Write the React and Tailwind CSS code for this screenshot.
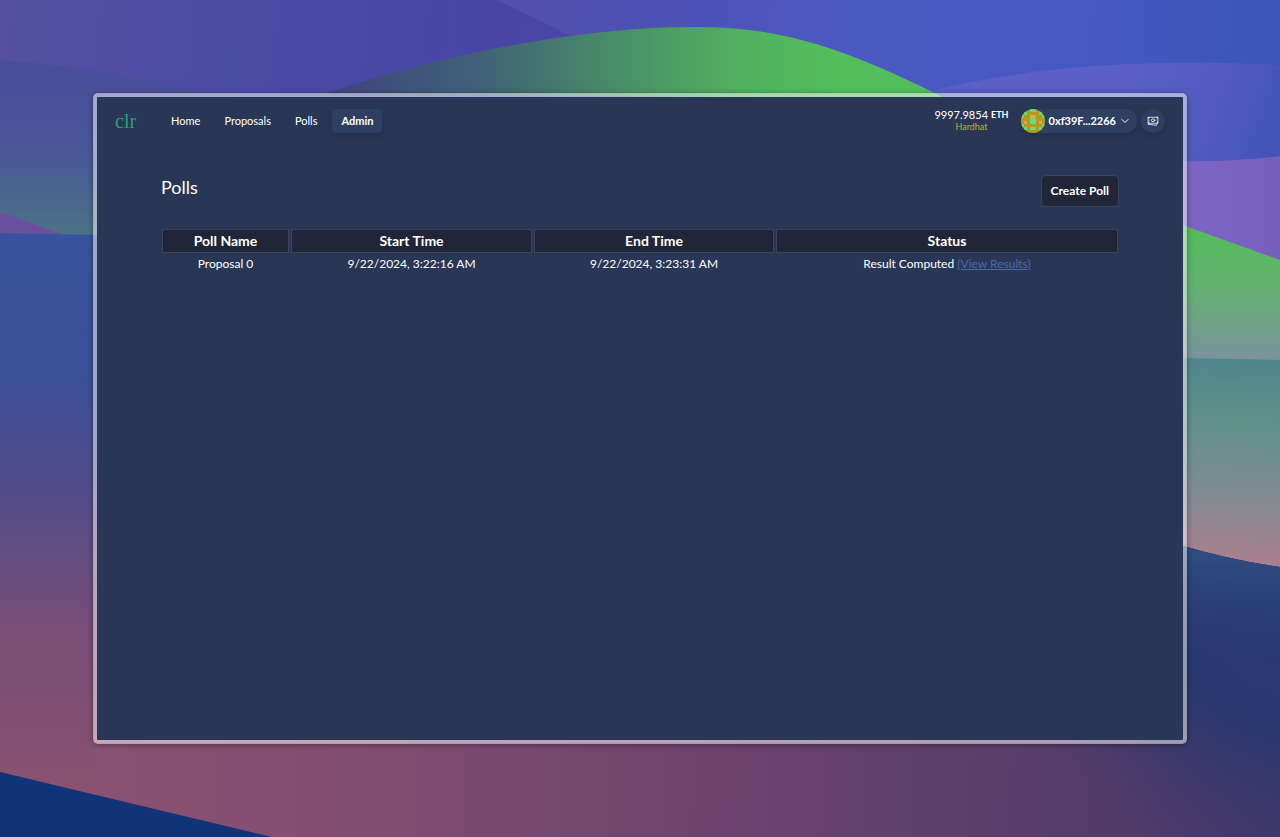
import React from "react";
import { ChevronDownIcon } from "lucide-react";

const NAV = ["Home", "Proposals", "Polls", "Admin"];

const COLUMNS = [
  { label: "Poll Name", width: "w-[127px]" },
  { label: "Start Time", width: "w-[241px]" },
  { label: "End Time", width: "w-[240px]" },
  { label: "Status", width: "w-[342px]" },
];

const POLLS = [
  { name: "Proposal 0", start: "9/22/2024, 3:22:16 AM", end: "9/22/2024, 3:23:31 AM", status: "Result Computed" },
];

function Wallpaper() {
  return (
    <svg className="absolute inset-0 h-full w-full" viewBox="0 0 1280 837" preserveAspectRatio="none" aria-hidden="true">
      <defs>
        <linearGradient id="sky" gradientUnits="userSpaceOnUse" x1="0" y1="0" x2="600" y2="60">
          <stop offset="0" stopColor="#544fa2" />
          <stop offset="0.4" stopColor="#4b4ca4" />
          <stop offset="0.8" stopColor="#4845a6" />
          <stop offset="1" stopColor="#4a47a8" />
        </linearGradient>
        <linearGradient id="ray" gradientUnits="userSpaceOnUse" x1="500" y1="0" x2="1280" y2="60">
          <stop offset="0" stopColor="#544eab" />
          <stop offset="0.2" stopColor="#4c51b5" />
          <stop offset="0.45" stopColor="#4c59c2" />
          <stop offset="0.75" stopColor="#4658c2" />
          <stop offset="1" stopColor="#3a55b8" />
        </linearGradient>
        <linearGradient id="fold" x1="0" y1="0" x2="0" y2="1">
          <stop offset="0" stopColor="#494d9c" />
          <stop offset="0.5" stopColor="#4a5698" />
          <stop offset="1" stopColor="#4c7585" />
        </linearGradient>
        <linearGradient id="hill" gradientUnits="userSpaceOnUse" x1="330" y1="0" x2="840" y2="0">
          <stop offset="0" stopColor="#3f4581" />
          <stop offset="0.3" stopColor="#3f6276" />
          <stop offset="0.6" stopColor="#4b9465" />
          <stop offset="0.8" stopColor="#50b05f" />
          <stop offset="1" stopColor="#53be5c" />
        </linearGradient>
        <linearGradient id="wave" gradientUnits="userSpaceOnUse" x1="1120" y1="60" x2="1280" y2="120">
          <stop offset="0" stopColor="#5a60c6" />
          <stop offset="0.6" stopColor="#535bc0" />
          <stop offset="1" stopColor="#4255b6" />
        </linearGradient>
        <linearGradient id="violet" x1="0" y1="0" x2="1" y2="0">
          <stop offset="0" stopColor="#7c64c4" />
          <stop offset="1" stopColor="#7660bd" />
        </linearGradient>
        <linearGradient id="meadow" gradientUnits="userSpaceOnUse" x1="0" y1="225" x2="0" y2="358">
          <stop offset="0" stopColor="#53bd5c" />
          <stop offset="0.5" stopColor="#65b073" />
          <stop offset="1" stopColor="#7b929e" />
        </linearGradient>
        <linearGradient id="lagoon" gradientUnits="userSpaceOnUse" x1="1230" y1="358" x2="1220" y2="560">
          <stop offset="0" stopColor="#4f858d" />
          <stop offset="0.3" stopColor="#5f9189" />
          <stop offset="0.65" stopColor="#7e8b91" />
          <stop offset="1" stopColor="#a9808f" />
        </linearGradient>
        <radialGradient id="deep" gradientUnits="userSpaceOnUse" cx="1290" cy="610" r="270">
          <stop offset="0" stopColor="#283b73" />
          <stop offset="0.45" stopColor="#2a3870" />
          <stop offset="1" stopColor="#3d376c" stopOpacity="0" />
        </radialGradient>
        <linearGradient id="crest" gradientUnits="userSpaceOnUse" x1="0" y1="546" x2="0" y2="660">
          <stop offset="0" stopColor="#304f84" />
          <stop offset="1" stopColor="#283b73" stopOpacity="0" />
        </linearGradient>
        <linearGradient id="dusk" gradientUnits="userSpaceOnUse" x1="0" y1="233" x2="0" y2="790">
          <stop offset="0" stopColor="#37539d" />
          <stop offset="0.25" stopColor="#3b5098" />
          <stop offset="0.45" stopColor="#504c8a" />
          <stop offset="0.7" stopColor="#764e78" />
          <stop offset="1" stopColor="#8a5270" />
        </linearGradient>
        <linearGradient id="floor" gradientUnits="userSpaceOnUse" x1="100" y1="740" x2="1280" y2="780">
          <stop offset="0" stopColor="#895272" />
          <stop offset="0.25" stopColor="#804c70" />
          <stop offset="0.5" stopColor="#6e446f" />
          <stop offset="0.75" stopColor="#5c3f69" />
          <stop offset="0.92" stopColor="#4c3969" />
          <stop offset="1" stopColor="#42376a" />
        </linearGradient>
      </defs>
      <rect width="1280" height="420" fill="url(#sky)" />
      <path d="M497 0L575 38L900 120H1280V0Z" fill="url(#ray)" />
      <path d="M0 60Q90 66 200 92V240H0Z" fill="url(#fold)" />
      <path d="M905 98C1010 68 1130 58 1280 65V170H905Z" fill="url(#wave)" />
      <path d="M320 95C420 62 560 27 695 27C780 27 840 46 945 98Z" fill="url(#hill)" />
      <path d="M1180 161Q1235 162 1280 156V270H1180Z" fill="url(#violet)" />
      <path d="M1180 224L1280 260V362H1180Z" fill="url(#meadow)" />
      <path d="M1180 358L1280 360V570H1180Z" fill="url(#lagoon)" />
      <path d="M0 212L62 234L0 236Z" fill="#6a519f" />
      <path d="M0 233L100 235V837H0Z" fill="url(#dusk)" />
      <path d="M95 735H1180V545Q1230 560 1280 567V837H95Z" fill="url(#floor)" />
      <path d="M1000 735H1180V545Q1230 560 1280 567V837H1000Z" fill="url(#deep)" />
      <path d="M1180 545Q1230 560 1280 567V670H1180Z" fill="url(#crest)" />
      <path d="M0 772L272 837H0Z" fill="#113377" />
    </svg>
  );
}

function Avatar() {
  return (
    <svg className="h-6 w-6 shrink-0 rounded-full" viewBox="0 0 8 8" shapeRendering="crispEdges" aria-hidden="true">
      <rect width="8" height="8" fill="#b39a1c" />
      <path d="M3 0h2v1H3zM1 1h1v1H1zM6 1h1v1H6zM0 2h1v1H0zM7 2h1v1H7zM3 3h2v2H3zM0 5h1v1H0zM7 5h1v1H7zM3 6h2v1H3zM1 6h1v1H1zM6 6h1v1H6z" fill="#5fe070" />
      <path d="M3 2h2v1H3zM1 4h1v1H1zM6 4h1v1H6z" fill="#e0a35a" />
    </svg>
  );
}

function BanknotesIcon() {
  return (
    <svg className="h-3 w-3" viewBox="0 0 24 24" fill="none" stroke="currentColor" strokeWidth="1.500" strokeLinecap="round" strokeLinejoin="round" aria-hidden="true">
      <path d="M2.250 18.750a60.070 60.070 0 0 1 15.797 2.101c.727.198 1.453-.342 1.453-1.096V18.750M3.750 4.500v.75A.75.75 0 0 1 3 6h-.75m0 0v-.375c0-.621.504-1.125 1.125-1.125H20.250M2.250 6v9m18-10.500v.75c0 .414.336.75.75.75h.75m-1.500-1.500h.375c.621 0 1.125.504 1.125 1.125v9.750c0 .621-.504 1.125-1.125 1.125h-.375m1.500-1.500H21a.75.75 0 0 0-.75.75v.75m0 0H3.750m0 0h-.375a1.125 1.125 0 0 1-1.125-1.125V15m1.500 1.500v-.75A.75.75 0 0 0 3 15h-.75M15 10.500a3 3 0 1 1-6 0 3 3 0 0 1 6 0Zm3 0h.008v.008H18V10.500Zm-12 0h.008v.008H6V10.500Z" />
    </svg>
  );
}

function Header() {
  return (
    <header className="flex min-h-12 items-center justify-between px-[18px]">
      <div className="flex items-center gap-[26px]">
        <a href="#home" className="font-['Liberation_Serif',serif] text-[20px] leading-6 text-[#26a07c]">clr</a>
        <nav className="flex items-center gap-[6px]">
          {NAV.map((item) => (
            <a
              key={item}
              href={"#" + item.toLowerCase()}
              className={
                item === "Admin"
                  ? "rounded-[4px] bg-[#2f3f62] px-[9px] text-[11px] leading-6 font-bold shadow-md"
                  : "rounded-[4px] px-[9px] text-[11px] leading-6"
              }
            >
              {item}
            </a>
          ))}
        </nav>
      </div>
      <div className="flex items-center">
        <div className="mr-3 flex flex-col items-center">
          <button type="button" className="flex items-center gap-[3px] text-[11px] leading-3">
            <span>9997.9854</span>
            <span className="text-[9px] font-bold">ETH</span>
          </button>
          <span className="text-[9px] leading-3 text-[#b5b932]">Hardhat</span>
        </div>
        <button type="button" className="mr-1 flex h-6 items-center rounded-full bg-[#2f3f62] pr-[6px] text-[11px] font-bold shadow-md">
          <Avatar />
          <span className="mr-[3px] ml-1">0xf39F...2266</span>
          <ChevronDownIcon className="h-3 w-3" strokeWidth={2} />
        </button>
        <button type="button" aria-label="Get test funds" className="flex h-6 w-6 items-center justify-center rounded-full bg-[#2f3f62] shadow-md">
          <BanknotesIcon />
        </button>
      </div>
    </header>
  );
}

export default function App() {
  return (
    <div className="relative isolate flex min-h-screen flex-col bg-[#3a4a90] p-[93px] font-['Lato',sans-serif] text-white">
      <Wallpaper />
      <div className="relative flex flex-1 flex-col rounded-[5px] border-4 border-white/50 bg-[#2a3655] bg-clip-padding shadow-[0_1px_6px_rgba(0,0,0,0.35)]">
        <Header />
        <main className="px-[63px] pt-[30px]">
          <div className="flex items-start justify-between px-px">
            <h1 className="text-[18px] leading-6">Polls</h1>
            <button type="button" className="h-8 rounded-[5px] border border-[#3b4262] bg-[#202638] px-[9px] text-[12px] font-bold">
              Create Poll
            </button>
          </div>
          <table className="mt-5 w-full table-fixed border-separate border-spacing-[2px] text-center">
            <thead>
              <tr>
                {COLUMNS.map((column) => (
                  <th key={column.label} scope="col" className={"border border-[#3b4262] bg-[#202638] p-0 text-[14px] leading-[22px] font-bold " + column.width}>
                    {column.label}
                  </th>
                ))}
              </tr>
            </thead>
            <tbody>
              {POLLS.map((poll) => (
                <tr key={poll.name} className="text-[12px] leading-[18px]">
                  <td className="p-0">{poll.name}</td>
                  <td className="p-0">{poll.start}</td>
                  <td className="p-0">{poll.end}</td>
                  <td className="p-0">
                    {poll.status}{" "}
                    <a href="#results" className="text-[#4b68ad] underline">(View Results)</a>
                  </td>
                </tr>
              ))}
            </tbody>
          </table>
        </main>
      </div>
    </div>
  );
}
